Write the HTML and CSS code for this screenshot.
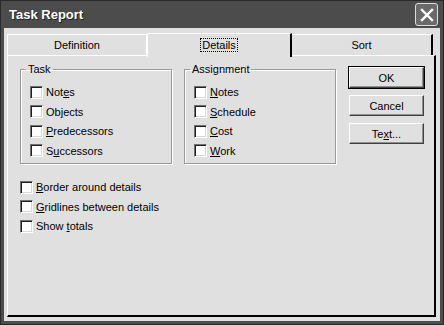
FILE: index.html
```html
<!DOCTYPE html>
<html lang="en">

<head>
    <meta charset="UTF-8">
    <title>Task Report</title>
    <link rel="stylesheet" href="styles.css">
</head>

<body>
    <div class="window">
        <div class="titlebar">
            <span class="title">Task Report</span>
            <span class="close">
                <svg width="14" height="14" viewBox="0 0 14 14">
                    <path d="M2 2 L12 12 M12 2 L2 12" stroke="#fff" stroke-width="2.4" stroke-linecap="square" />
                </svg>
            </span>
        </div>
        <div class="client">
            <div class="tabs">
                <div class="tab">Definition</div>
                <div class="tab active"><span class="focus">Details</span></div>
                <div class="tab last">Sort</div>
            </div>
            <div class="panel">
                <div class="top">
                    <fieldset class="group task">
                        <legend>Task</legend>
                        <label class="check"><span class="box"></span><span>Not<u>e</u>s</span></label>
                        <label class="check"><span class="box"></span><span>Ob<u>j</u>ects</span></label>
                        <label class="check"><span class="box"></span><span><u>P</u>redecessors</span></label>
                        <label class="check"><span class="box"></span><span>S<u>u</u>ccessors</span></label>
                    </fieldset>
                    <fieldset class="group assign">
                        <legend>Assignment</legend>
                        <label class="check"><span class="box"></span><span><u>N</u>otes</span></label>
                        <label class="check"><span class="box"></span><span><u>S</u>chedule</span></label>
                        <label class="check"><span class="box"></span><span><u>C</u>ost</span></label>
                        <label class="check"><span class="box"></span><span><u>W</u>ork</span></label>
                    </fieldset>
                    <div class="buttons">
                        <button class="btn default">OK</button>
                        <button class="btn">Cancel</button>
                        <button class="btn">Te<u>x</u>t...</button>
                    </div>
                </div>
                <div class="options">
                    <label class="check"><span class="box"></span><span><u>B</u>order around details</span></label>
                    <label class="check"><span class="box"></span><span><u>G</u>ridlines between details</span></label>
                    <label class="check"><span class="box"></span><span>Show <u>t</u>otals</span></label>
                </div>
            </div>
        </div>
    </div>
</body>

</html>
```

FILE: styles.css
```css
body {
    margin: 0;
    font-family: 'Liberation Sans', Arial, sans-serif;
    font-size: 11px;
    color: #000;
}

.window {
    width: 444px;
    height: 325px;
    box-sizing: border-box;
    background-color: #4c4c4c;
    border: 1px solid #2a2a2a;
    padding: 0 3px 3px 3px;
    display: flex;
    flex-direction: column;
}

.titlebar {
    height: 27px;
    display: flex;
    align-items: center;
    justify-content: space-between;
    padding: 0 2px 0 5px;
}

.title {
    color: #fff;
    font-weight: bold;
    font-size: 13px;
    text-shadow: 1px 1px 0 #222;
}

.close {
    width: 21px;
    height: 21px;
    border: 1px solid #ddd;
    border-radius: 3px;
    background-color: #6a6a6a;
    display: flex;
    align-items: center;
    justify-content: center;
}

.client {
    flex: 1;
    background-color: #e0e0e0;
    padding: 3px 4px 4px 3px;
    display: flex;
    flex-direction: column;
}

.tabs {
    display: flex;
    height: 24px;
    align-items: flex-end;
}

.tab {
    width: 140px;
    height: 21px;
    box-sizing: border-box;
    border-top: 1px solid #fff;
    border-left: 1px solid #fff;
    border-right: 1px solid #fff;
    display: flex;
    align-items: center;
    justify-content: center;
}

.tab.active {
    width: 145px;
    height: 24px;
    border-right: 2px solid #000;
    margin-bottom: -2px;
    position: relative;
    background-color: #e0e0e0;
    padding-bottom: 2px;
}

.tab.last {
    width: 141px;
    border-left: none;
    border-right: 2px solid #000;
}

.focus {
    outline: 1px dotted #000;
    padding: 0 1px;
}

.panel {
    flex: 1;
    border-top: 1px solid #fff;
    border-left: 1px solid #fff;
    border-right: 2px solid #000;
    border-bottom: 2px solid #000;
    padding: 7px 6px 0 12px;
}

.top {
    display: flex;
    align-items: flex-start;
}

.group {
    margin: 0;
    flex-shrink: 0;
    width: 152px;
    height: 101px;
    box-sizing: border-box;
    border: 1px solid #9a9a9a;
    box-shadow: 1px 1px 0 #fff, inset 1px 1px 0 #fff;
    padding: 10px 0 0 9px;
    display: flex;
    flex-direction: column;
    gap: 5.6px;
}

.group legend {
    padding: 0 2px;
    margin-left: -4px;
}

.assign {
    margin-left: 12px;
}

.check {
    display: flex;
    align-items: center;
    height: 14px;
    gap: 3px;
}

.box {
    width: 11px;
    height: 11px;
    background-color: #fff;
    border: 1px solid;
    border-color: #707070 #fff #fff #707070;
    box-shadow: inset 1px 1px 0 #202020, inset -1px -1px 0 #d8d8d8;
}

.buttons {
    flex-shrink: 0;
    margin-left: 13px;
    margin-top: 4px;
    display: flex;
    flex-direction: column;
    gap: 7px;
}

.btn {
    width: 75px;
    height: 21px;
    font-family: inherit;
    font-size: 11px;
    background-color: #e0e0e0;
    border: 1px solid;
    border-color: #fff #404040 #404040 #fff;
    box-shadow: inset -1px -1px 0 #909090;
    padding: 0;
}

.btn.default {
    outline: 1px solid #000;
}

.options {
    margin-top: 16px;
    display: flex;
    flex-direction: column;
    gap: 5.5px;
}
```
